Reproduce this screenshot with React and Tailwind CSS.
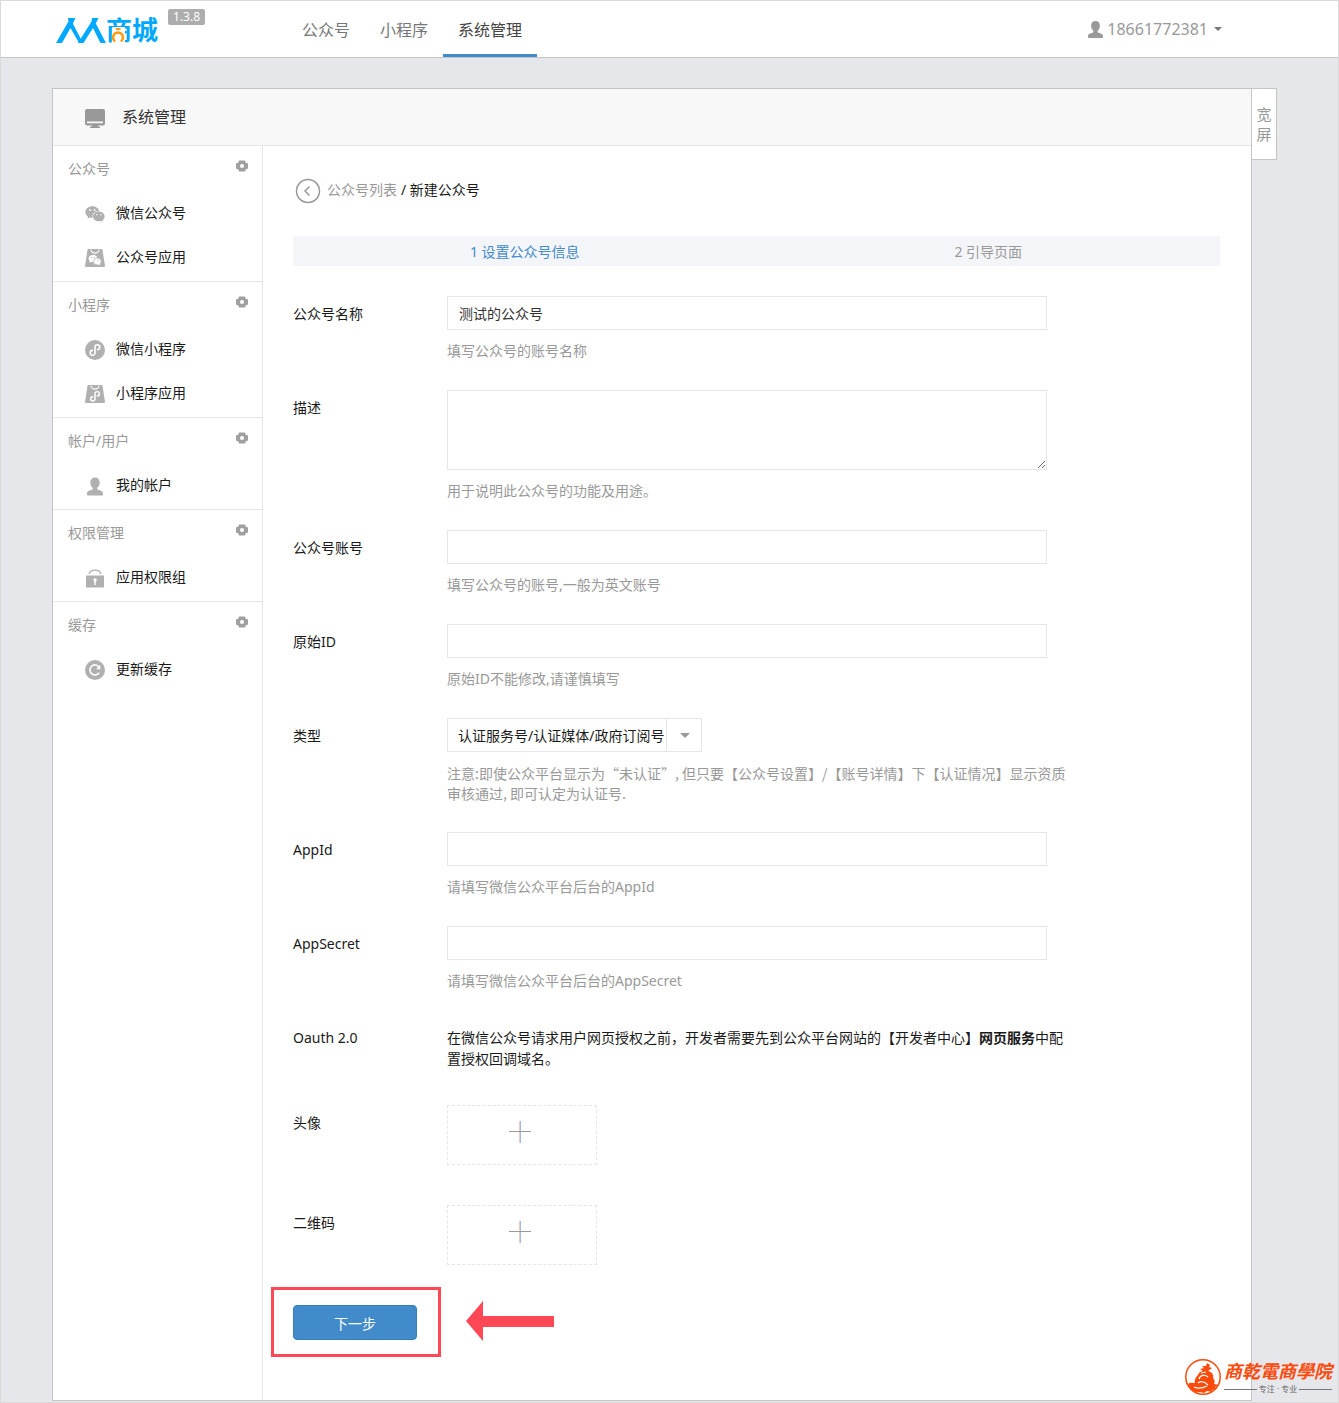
import React from "react";
import { AiFillWechat } from "react-icons/ai";

function Logo() {
  return (
    <svg className="overflow-visible" width="104" height="30" viewBox="0 0 104 30" role="img" aria-label="人人商城">
      <g fill="#00a8ff">
        <path d="M13 2H20.500L17.800 7.500L28 27H24L15.500 12L7 27H1L13.500 5.500z" />
        <path d="M37 2H43.500L40.800 7.500L51 27H45.500L38 12L28.500 27H23L36.500 5.500z" />
      </g>
      <text x="51" y="24" fontSize="26" fontWeight="700" fill="#00a8ff" className="font-['Noto_Sans_CJK_SC',sans-serif]">商城</text>
      <rect x="57" y="11" width="13" height="16" fill="#fff" />
      <path d="M60 25.500A5 5 0 1 1 66 25.500" fill="none" stroke="#ff9a0d" strokeWidth="2.600" />
      <path d="M61 13H65.500" stroke="#ff9a0d" strokeWidth="2" />
    </svg>
  );
}

function UserIcon({ className }) {
  return (
    <svg className={className} viewBox="0 0 16 18" fill="currentColor" aria-hidden="true">
      <path d="M8 0C5 0 3.300 2 3.300 5c0 2.300 1 4.300 2.400 5.300v1.500C5.700 12.800 0 12.500 0 16v1c0 .6.400 1 1 1h14c.6 0 1-.4 1-1v-1c0-3.500-5.700-3.200-5.700-4.200v-1.500C11.700 9.300 12.700 7.300 12.700 5c0-3-1.700-5-4.700-5z" />
    </svg>
  );
}

function GearIcon() {
  return (
    <svg width="12" height="12" viewBox="0 0 12 12" aria-hidden="true">
      <path d="M3 .5H9L10 3H11.500L12 4V8L11.500 9H10L9 11.500H3L2 9H.5L0 8V4L.5 3H2z" fill="#a0a0a0" />
      <circle cx="6" cy="6" r="2" fill="#fff" />
    </svg>
  );
}

const miniPath = "M12.600 9.600a2.400 2.400 0 1 0-2.600-2.400V12.800a2.400 2.400 0 1 1-2.600-2.400";

function Bag({ children }) {
  return (
    <svg width="20" height="20" viewBox="0 0 20 20" aria-hidden="true">
      <path d="M3.500 1h13a1 1 0 0 1 1 .8L20 18a1 1 0 0 1-1 1H1a1 1 0 0 1-1-1L2.500 1.800a1 1 0 0 1 1-.8z" fill="#b0b0b0" />
      <path d="M6 1.500a4 3.600 0 0 0 8 0" fill="none" stroke="#fff" strokeWidth="1.100" />
      {children}
    </svg>
  );
}

function ItemIcon({ name }) {
  if (name === "wechat") return <AiFillWechat size={22} className="-mx-px text-[#b0b0b0]" />;
  if (name === "wechatBag")
    return (
      <Bag>
        <ellipse cx="8" cy="10.500" rx="4.300" ry="3.600" fill="#fff" />
        <path d="M5 12l-.5 3 2.500-1.500z" fill="#fff" />
        <ellipse cx="12.200" cy="13.500" rx="4" ry="3.400" fill="#fff" stroke="#b0b0b0" strokeWidth=".7" />
        <path d="M13 16l2.200 1.300-.2-2.300z" fill="#fff" />
        <g fill="#b0b0b0">
          <circle cx="6.500" cy="9.700" r=".6" />
          <circle cx="9.300" cy="9.300" r=".6" />
          <circle cx="11" cy="12.800" r=".5" />
          <circle cx="13.500" cy="12.800" r=".5" />
        </g>
      </Bag>
    );
  if (name === "mini")
    return (
      <svg width="20" height="20" viewBox="0 0 20 20" aria-hidden="true">
        <circle cx="10" cy="10" r="10" fill="#b0b0b0" />
        <path d={miniPath} fill="none" stroke="#fff" strokeWidth="1.600" strokeLinecap="round" />
      </svg>
    );
  if (name === "miniBag")
    return (
      <Bag>
        <path d={miniPath} transform="translate(1 3.300) scale(.9)" fill="none" stroke="#fff" strokeWidth="1.600" strokeLinecap="round" />
      </Bag>
    );
  if (name === "user")
    return (
      <span className="flex w-5 justify-center">
        <UserIcon className="h-[19px] w-4 text-[#b0b0b0]" />
      </span>
    );
  if (name === "lock")
    return (
      <svg width="20" height="20" viewBox="0 0 20 20" aria-hidden="true">
        <path d="M4 6a6.200 5.200 0 0 1 12 0" fill="none" stroke="#b0b0b0" strokeWidth="1.400" />
        <path d="M1 7.500h18V19.500H1z" fill="#b0b0b0" />
        <circle cx="10" cy="12" r="1.700" fill="#fff" />
        <path d="M10 12v5" stroke="#fff" strokeWidth="1.500" />
      </svg>
    );
  return (
    <svg width="20" height="20" viewBox="0 0 20 20" aria-hidden="true">
      <circle cx="10" cy="10" r="10" fill="#b0b0b0" />
      <path d="M14.200 12.600A5 5 0 1 1 13.800 6.700" fill="none" stroke="#fff" strokeWidth="1.600" />
      <path d="M15.300 5v4.300h-4.300z" fill="#fff" />
    </svg>
  );
}

const sections = [
  { title: "公众号", items: [["wechat", "微信公众号"], ["wechatBag", "公众号应用"]] },
  { title: "小程序", items: [["mini", "微信小程序"], ["miniBag", "小程序应用"]] },
  { title: "帐户/用户", items: [["user", "我的帐户"]] },
  { title: "权限管理", items: [["lock", "应用权限组"]] },
  { title: "缓存", items: [["refresh", "更新缓存"]] },
];

function Sidebar() {
  return (
    <nav className="w-[210px] shrink-0 border-r border-[#e5e6e9]">
      {sections.map((s, i) => (
        <section key={s.title} className={i < sections.length - 1 ? "border-b border-[#e5e6e9] pb-0.5" : ""}>
          <div className="flex h-[45px] items-center justify-between pr-3.5 pl-[15px]">
            <h2 className="text-[#999]">{s.title}</h2>
            <button type="button" aria-label={s.title + "设置"} className="pb-1.5"><GearIcon /></button>
          </div>
          {s.items.map(([icon, label]) => (
            <a key={label} href="#" className="flex h-11 items-center gap-[11px] pl-8 text-[#1a1a1a]">
              <span className="mt-0.5 flex w-5 justify-center"><ItemIcon name={icon} /></span>
              {label}
            </a>
          ))}
        </section>
      ))}
    </nav>
  );
}

function Row({ id, label, help, children }) {
  return (
    <div className="flex pb-[29px]">
      <label htmlFor={id} className="w-[154px] shrink-0 pt-2">{label}</label>
      <div className="max-w-[620px] min-w-0 flex-1">
        {children}
        <div className="mt-[11px] text-[#999]">{help}</div>
      </div>
    </div>
  );
}

const field = "block w-full max-w-[600px] border border-[#e5e6e9] bg-white px-[11px] text-[#333] outline-none";

function TextRow({ id, label, help, value }) {
  return (
    <Row id={id} label={label} help={help}>
      <input id={id} type="text" defaultValue={value} className={field + " h-[34px]"} />
    </Row>
  );
}

function Upload({ id, label }) {
  return (
    <div className="flex pb-10">
      <span id={id} className="w-[154px] shrink-0 pt-2">{label}</span>
      <button type="button" aria-labelledby={id} className="flex h-[60px] w-[150px] justify-center border border-dashed border-[#e5e5e5] pt-[15px] pr-1">
        <svg width="22" height="22" viewBox="0 0 22 22" fill="none" aria-hidden="true">
          <path d="M11.500 0V22" stroke="#9dbbe6" />
          <path d="M10.500 0V22" stroke="#e8cdbd" />
          <path d="M0 10.500H22" stroke="#999" />
        </svg>
      </button>
    </div>
  );
}

function Watermark() {
  return (
    <div className="absolute right-1.5 bottom-1.5 flex items-center gap-0.5 text-[#fc4a0a]">
      <svg width="38" height="38" viewBox="0 0 38 38" fill="none" aria-hidden="true">
        <circle cx="19" cy="19" r="17.200" stroke="currentColor" strokeWidth="1.500" />
        <path d="M4 26c2-2 5-1 7-1-1-3 1-6 3-8 1-3 3-4 5-4l-3-2 4-1-2-2 4 0 1-3 3 2-1 2 3 1-4 3c4 1 6 4 5 7 2 2 2 4 1 6l5 1-4 2 2 2-5 1 0 2-5-1-3 2-4-1c-5 1-9-1-12-8z" fill="currentColor" />
        <path d="M15 21c1-4 6-5 9-2M14 25c4-3 7-1 10 2M10 29c4 2 9 1 13-1M17 15l5-1" stroke="#fff" strokeWidth="1.200" />
      </svg>
      <div>
        <div className="text-[18px] leading-6 font-bold italic">商乾電商學院</div>
        <div className="flex h-3 items-center gap-0.5 text-[8px] leading-3 text-[#666]">
          <i className="h-px flex-1 bg-[#777]" />
          专注 · 专业
          <i className="h-px flex-1 bg-[#777]" />
        </div>
      </div>
    </div>
  );
}

export default function App() {
  return (
    <div className="relative flex min-h-screen flex-col border border-[#d9d9d9] bg-[#e6e7eb] font-['Noto_Sans','Noto_Sans_CJK_SC',sans-serif] text-sm leading-5 font-normal text-[#1a1a1a]">
      <header className="flex h-[57px] border-b border-[#c5c5c5] bg-white pr-[116px] pl-[54px]">
        <a href="#" className="mt-[15px]"><Logo /></a>
        <span className="mt-2 ml-[9px] h-4 w-[37px] rounded-xs bg-[#adadad] text-center text-xs leading-4 text-white">1.3.8</span>
        <nav className="ml-[82px] flex text-base text-[#777]">
          <a href="#" className="flex items-center px-[15px] pt-px">公众号</a>
          <a href="#" className="flex items-center px-[15px] pt-px">小程序</a>
          <a href="#" className="flex items-center border-b-[3px] border-[#428bca] px-[15px] pt-1 text-[#444]">系统管理</a>
        </nav>
        <button type="button" className="ml-auto flex items-center text-base text-[#999]">
          <UserIcon className="mr-1 h-[17px] w-[15px]" />
          18661772381
          <svg className="ml-1.5" width="8" height="4" viewBox="0 0 8 4" aria-hidden="true"><path d="M0 0h8L4 4z" fill="#777" /></svg>
        </button>
      </header>

      <div className="flex flex-1 items-stretch pt-[30px] pr-[61px] pb-px pl-[51px]">
        <main className="flex min-w-0 flex-1 flex-col border border-[#c5c5c5] bg-white">
          <div className="flex h-[57px] shrink-0 items-center border-b border-[#e5e6e9] bg-[#f8f8f8] pl-8">
            <svg className="mt-1" width="20" height="20" viewBox="0 0 20 20" fill="#999" aria-hidden="true">
              <path fillRule="evenodd" d="M2 0h16a2 2 0 0 1 2 2v12.500a2 2 0 0 1-2 2H2a2 2 0 0 1-2-2V2a2 2 0 0 1 2-2zM2 12.500v1.800h16v-1.800z" />
              <path d="M7 16h6v1.500h2V19H5v-1.500h2z" />
            </svg>
            <h1 className="ml-[17px] text-base text-[#333]">系统管理</h1>
          </div>
          <div className="flex flex-1">
            <Sidebar />
            <div className="min-w-0 flex-1 pt-8 pr-[31px] pb-14 pl-[30px]">
              <div className="flex h-[26px] items-center pl-0.5">
                <a href="#" aria-label="返回">
                  <svg width="26" height="26" viewBox="0 0 26 26" fill="none" stroke="#999" aria-hidden="true">
                    <circle cx="13" cy="13" r="11.500" strokeWidth="1.500" />
                    <path d="M14.500 8.500L10 13l4.500 4.500" strokeWidth="1.500" />
                  </svg>
                </a>
                <a href="#" className="ml-1.5 pb-0.5 text-[#999]">公众号列表</a>
                <span className="ml-1 pb-0.5 whitespace-pre">/ 新建公众号</span>
              </div>
              <ol className="mt-8 grid h-[30px] grid-cols-2 items-center bg-[#f4f5f9] pt-0.5 text-center text-[#999]">
                <li className="text-[#428bca]">1 设置公众号信息</li>
                <li>2 引导页面</li>
              </ol>
              <form className="mt-[30px]">
                <TextRow id="name" label="公众号名称" value="测试的公众号" help="填写公众号的账号名称" />
                <Row id="desc" label="描述" help="用于说明此公众号的功能及用途。">
                  <textarea id="desc" className={field + " h-20 resize"} />
                </Row>
                <TextRow id="account" label="公众号账号" help="填写公众号的账号,一般为英文账号" />
                <TextRow id="original" label="原始ID" help="原始ID不能修改,请谨慎填写" />
                <Row
                  id="type"
                  label="类型"
                  help={
                    <p className="font-['Noto_Sans_CJK_SC',sans-serif]">
                      注意:即使公众平台显示为“未认证”, 但只要【公众号设置】/【账号详情】下【认证情况】显示资质审核通过, 即可认定为认证号.
                    </p>
                  }
                >
                  <div className="relative h-[34px] w-[255px]">
                    <select id="type" className="h-full w-full appearance-none border border-[#e5e6e9] bg-white pt-0.5 pl-2.5 text-[#1a1a1a] outline-none">
                      <option>认证服务号/认证媒体/政府订阅号</option>
                    </select>
                    <span className="pointer-events-none absolute inset-y-0 right-0 flex w-9 items-center justify-center border-l border-[#e5e6e9]">
                      <svg width="10" height="5" viewBox="0 0 10 5" aria-hidden="true"><path d="M0 0h10L5 5z" fill="#999" /></svg>
                    </span>
                  </div>
                </Row>
                <TextRow id="appid" label="AppId" help="请填写微信公众平台后台的AppId" />
                <TextRow id="secret" label="AppSecret" help="请填写微信公众平台后台的AppSecret" />
                <div className="flex pb-9">
                  <span className="w-[154px] shrink-0 pt-2">Oauth 2.0</span>
                  <p className="max-w-[620px] min-w-0 flex-1 pt-[7px] leading-[21px]">
                    在微信公众号请求用户网页授权之前，开发者需要先到公众平台网站的【开发者中心】<b className="font-bold">网页服务</b>中配置授权回调域名。
                  </p>
                </div>
                <Upload id="avatar" label="头像" />
                <Upload id="qrcode" label="二维码" />
                <div className="flex items-start">
                  <div className="relative">
                    <button type="submit" className="h-[35px] w-[124px] rounded-sm border border-[#357ebd] bg-[#428bca] pt-0.5 text-white">下一步</button>
                    <div className="pointer-events-none absolute -top-[18px] -right-6 -bottom-[17px] -left-[22px] border-3 border-[#ff4756]" />
                  </div>
                  <svg className="-mt-1 ml-[49px]" width="88" height="40" viewBox="0 0 88 40" aria-hidden="true">
                    <path d="M0 20L17 0V15H88V26H17V40z" fill="#ff4756" />
                  </svg>
                </div>
              </form>
            </div>
          </div>
        </main>
        <button type="button" className="w-[25px] self-start border border-l-0 border-[#c5c5c5] bg-white px-1 pt-[15px] pb-[15px] text-[15px] text-[#999]">
          宽<br />屏
        </button>
      </div>
      <Watermark />
    </div>
  );
}
